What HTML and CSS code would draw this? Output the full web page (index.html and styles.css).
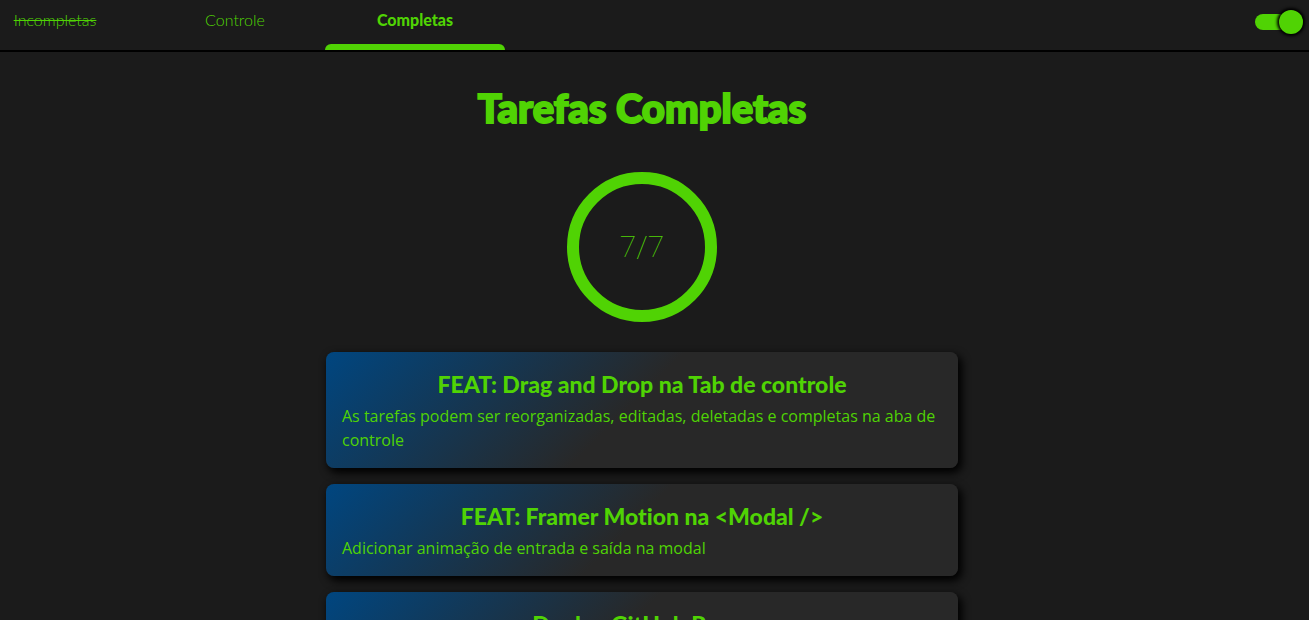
FILE: index.html
```html
<!DOCTYPE html>
<html lang="pt-BR">
<head>
<meta charset="utf-8">
<meta name="viewport" content="width=device-width, initial-scale=1">
<title>Tarefas Completas</title>
<link rel="stylesheet" href="styles.css">
</head>
<body>
<header class="topbar">
  <nav class="tabs">
    <a class="tab tab-disabled" href="#incompletas">Incompletas</a>
    <a class="tab tab-wide" href="#controle">Controle</a>
    <a class="tab tab-wide tab-active" href="#completas" aria-current="page">Completas</a>
  </nav>
  <input class="switch" type="checkbox" role="switch" aria-label="Tema escuro" checked>
</header>
<main class="content">
  <h1 class="title">Tarefas Completas</h1>
  <div class="progress">7/7</div>
  <ul class="tasks">
    <li class="task">
      <h2 class="task-title">FEAT: Drag and Drop na Tab de controle</h2>
      <p class="task-text">As tarefas podem ser reorganizadas, editadas, deletadas e completas na aba de controle</p>
    </li>
    <li class="task">
      <h2 class="task-title">FEAT: Framer Motion na &lt;Modal /&gt;</h2>
      <p class="task-text">Adicionar animação de entrada e saída na modal</p>
    </li>
    <li class="task">
      <h2 class="task-title">Deploy GitHub Pages</h2>
    </li>
  </ul>
</main>
</body>
</html>
```
FILE: styles.css
```css
:root {
  --green: #50d304;
  --page: #1b1b1b;
  --card: #282828;
  --display: Lato, "Open Sans", sans-serif;
}

* {
  box-sizing: border-box;
}

body {
  display: flex;
  flex-direction: column;
  height: 100vh;
  margin: 0;
  background: var(--page);
  color: var(--green);
  font: 16px/24px "Open Sans", sans-serif;
}

.topbar {
  display: flex;
  flex: none;
  justify-content: space-between;
  align-items: flex-start;
  border-bottom: 2px solid #000;
}

.tabs {
  display: flex;
  height: 50px;
}

.tab {
  display: flex;
  flex-direction: column;
  justify-content: space-between;
  width: 110px;
  margin-right: 35px;
  padding-top: 8px;
  color: inherit;
  font-family: var(--display);
  font-weight: 300;
  text-align: center;
  text-decoration: none;
  -webkit-text-stroke: 0;
}

.tab-wide {
  width: 180px;
  margin-right: 0;
}

.tab-disabled {
  text-decoration: line-through;
}

.tab-active {
  font-weight: 900;
}

.tab-active::after {
  content: "";
  height: 6px;
  border-radius: 6px 6px 0 0;
  background: var(--green);
}

.switch {
  appearance: none;
  display: flex;
  align-items: center;
  justify-content: flex-end;
  width: 48px;
  height: 16px;
  margin: 14px 6px 0 0;
  border-radius: 8px;
  background: var(--green);
}

.switch::before {
  content: "";
  flex: none;
  width: 24px;
  height: 24px;
  border-radius: 50%;
  background: var(--green);
  box-shadow: 0 0 3px 2px #000;
}

.content {
  flex: 1;
  min-height: 0;
  padding: 32px 25px 0 0;
  overflow-y: auto;
  scrollbar-width: none;
}

.title {
  margin: 0;
  font: 900 40px/48px var(--display);
  text-align: center;
  -webkit-text-stroke: 2px var(--green);
}

.progress {
  display: grid;
  place-items: center;
  width: 150px;
  height: 150px;
  margin: 40px auto 30px;
  border: 12px solid var(--green);
  border-radius: 50%;
  font: 100 30px/40px Roboto, sans-serif;
}

.tasks {
  display: grid;
  gap: 16px;
  max-width: 632px;
  margin: 0 auto;
  padding: 0 0 16px;
  list-style: none;
}

.task {
  padding: 16px;
  border-radius: 8px;
  background: linear-gradient(135deg, #004680, var(--card) 48%);
  box-shadow: 3px 4px 8px 1px #000;
}

.task-title {
  margin: 0 0 4px;
  font: 900 23px/32px var(--display);
  font-variant-ligatures: none;
  text-align: center;
}

.task-text {
  margin: 0;
}
```
